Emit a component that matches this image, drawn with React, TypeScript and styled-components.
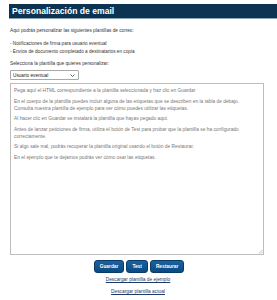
import React from "react";
import styled, { createGlobalStyle } from "styled-components";

const Global = createGlobalStyle`
  html, body { margin: 0; padding: 0; background: #ffffff; }
  body { font-family: "Liberation Sans", Arial, sans-serif; }
`;

const Page = styled.div`
  width: 277px;
  padding: 4px 0 0 9px;
  box-sizing: border-box;
`;

const Header = styled.div`
  height: 14px;
  background: #0c3452;
  border-bottom: 1px solid #8ea3b6;
  display: flex;
  align-items: center;
  padding-left: 3px;
`;

const Title = styled.h1`
  margin: 0;
  font-size: 8.6px;
  font-weight: bold;
  color: #ffffff;
  line-height: 1;
`;

const Content = styled.div`
  padding: 0 13px 0 1px;
  display: flex;
  flex-direction: column;
`;

const Text = styled.p<{ $top: number }>`
  margin: ${(p) => p.$top}px 0 0 0;
  font-size: 4.7px;
  line-height: 7px;
  color: #333333;
`;

const SelectBox = styled.div`
  margin-top: 3px;
  width: 62px;
  height: 8px;
  border: 1px solid #a9a9a9;
  border-radius: 1px;
  display: flex;
  align-items: center;
  justify-content: space-between;
  padding: 0 3px 0 2px;
  font-size: 4.7px;
  color: #222;
  box-sizing: content-box;
`;

const Chevron = styled.svg`
  width: 5px;
  height: 3px;
`;

const Area = styled.div`
  position: relative;
  margin-top: 3px;
  height: 172px;
  border: 1px solid #bdbdbd;
  padding: 3px 3px;
  box-sizing: border-box;
  font-size: 4.85px;
  line-height: 7px;
  color: #777777;
`;

const Para = styled.p`
  margin: 0 0 3.5px 0;
`;

const Grip = styled.svg`
  position: absolute;
  right: 0;
  bottom: 0;
  width: 5px;
  height: 5px;
`;

const Buttons = styled.div`
  display: flex;
  justify-content: center;
  gap: 2px;
  margin-top: 5px;
  padding-left: 4px;
`;

const Button = styled.button`
  height: 13px;
  padding: 0 5px;
  border: 1px solid #0a3a66;
  border-radius: 3px;
  background: linear-gradient(#1a62a0, #0b4a82);
  color: #ffffff;
  font-family: "Liberation Sans", Arial, sans-serif;
  font-size: 4.8px;
  font-weight: bold;
  cursor: pointer;
`;

const Links = styled.div`
  display: flex;
  flex-direction: column;
  align-items: center;
  gap: 6px;
  margin-top: 4px;
  padding-left: 2px;
`;

const Link = styled.a`
  font-size: 4.8px;
  line-height: 6px;
  color: #1d3b66;
  text-decoration: underline;
`;

export default function App() {
  return (
    <>
      <Global />
      <Page>
        <Header>
          <Title>Personalización de email</Title>
        </Header>
        <Content>
          <Text $top={8}>Aquí podrás personalizar las siguientes plantillas de correo:</Text>
          <Text $top={6}>- Notificaciones de firma para usuario eventual</Text>
          <Text $top={1}>- Envíos de documento completado a destinatarios en copia</Text>
          <Text $top={5}>Selecciona la plantilla que quieres personalizar:</Text>
          <SelectBox>
            <span>Usuario eventual</span>
            <Chevron viewBox="0 0 10 6">
              <path d="M1 1 L5 5 L9 1" fill="none" stroke="#333" strokeWidth="1.6" />
            </Chevron>
          </SelectBox>
          <Area>
            <Para>Pega aquí el HTML correspondiente a la plantilla seleccionada y haz clic en Guardar</Para>
            <Para>
              En el cuerpo de la plantilla puedes incluir alguna de las etiquetas que se describen en la tabla de debajo.
              <br />
              Consulta nuestra plantilla de ejemplo para ver cómo puedes utilizar las etiquetas.
            </Para>
            <Para>Al hacer clic en Guardar se instalará la plantilla que hayas pegado aquí.</Para>
            <Para>
              Antes de lanzar peticiones de firma, utiliza el botón de Test para probar que la plantilla se ha configurado
              correctamente.
            </Para>
            <Para>Si algo sale mal, podrás recuperar la plantilla original usando el botón de Restaurar.</Para>
            <Para>En el ejemplo que te dejamos podrás ver cómo usar las etiquetas.</Para>
            <Grip viewBox="0 0 5 5">
              <path d="M4.5 1 L1 4.5 M4.5 3 L3 4.5" stroke="#999" strokeWidth="0.6" />
            </Grip>
          </Area>
          <Buttons>
            <Button>Guardar</Button>
            <Button>Test</Button>
            <Button>Restaurar</Button>
          </Buttons>
          <Links>
            <Link href="#">Descargar plantilla de ejemplo</Link>
            <Link href="#">Descargar plantilla actual</Link>
          </Links>
        </Content>
      </Page>
    </>
  );
}
